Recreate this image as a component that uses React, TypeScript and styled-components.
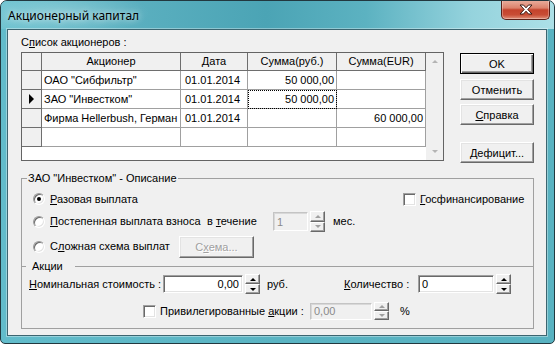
import React from "react"
import styled, { createGlobalStyle } from "styled-components"

const GlobalStyle = createGlobalStyle`
  html, body {
    margin: 0;
    padding: 0;
    background: #ffffff;
  }
  body {
    font-family: "Liberation Sans", Arial, sans-serif;
    font-size: 11px;
    color: #000;
  }
`

interface ShareRow {
    name: string
    date: string
    rub: string
    eur: string
    current?: boolean
}

const rows: ShareRow[] = [
    { name: 'ОАО "Сибфильтр"', date: "01.01.2014", rub: "50 000,00", eur: "" },
    { name: 'ЗАО "Инвестком"', date: "01.01.2014", rub: "50 000,00", eur: "", current: true },
    { name: "Фирма Hellerbush, Герман", date: "01.01.2014", rub: "", eur: "60 000,00" },
    { name: "", date: "", rub: "", eur: "" },
]

export default function App() {
    return (
        <>
            <GlobalStyle />
            <Window>
                <TitleBar>
                    <Title>Акционерный капитал</Title>
                    <CloseButton>
                        <svg width="14" height="11" viewBox="0 0 14 11">
                            <path
                                d="M1 1 H4.5 L7 3.8 L9.5 1 H13 L8.8 5.5 L13 10 H9.5 L7 7.2 L4.5 10 H1 L5.2 5.5 Z"
                                fill="#fff"
                                stroke="#3b1a14"
                                strokeWidth="1"
                                strokeLinejoin="round"
                            />
                        </svg>
                    </CloseButton>
                </TitleBar>

                <Client>
                    <TopSection>
                        <ListColumn>
                            <Caption>С<Acc>п</Acc>исок акционеров :</Caption>
                            <GridFrame>
                                <GridTable>
                                    <Cell $kind="head" />
                                    <Cell $kind="head" $align="center">Акционер</Cell>
                                    <Cell $kind="head" $align="center">Дата</Cell>
                                    <Cell $kind="head" $align="center">Сумма(руб.)</Cell>
                                    <Cell $kind="head" $align="center">Сумма(EUR)</Cell>
                                    {rows.map((r, i) => (
                                        <React.Fragment key={i}>
                                            <Cell $kind="ind">
                                                {r.current && (
                                                    <svg width="6" height="10" viewBox="0 0 6 10">
                                                        <polygon points="0,0 5,5 0,10" fill="#000" />
                                                    </svg>
                                                )}
                                            </Cell>
                                            <Cell $kind="data">{r.name}</Cell>
                                            <Cell $kind="data" $pad={4}>{r.date}</Cell>
                                            <Cell $kind="data" $align="right" $focus={r.current}>{r.rub}</Cell>
                                            <Cell $kind="data" $align="right">{r.eur}</Cell>
                                        </React.Fragment>
                                    ))}
                                </GridTable>
                                <ScrollBar>
                                    <ScrollArrow><Arrow $dir="up" $color="#b4b4b4" /></ScrollArrow>
                                    <ScrollArrow><Arrow $dir="down" $color="#b4b4b4" /></ScrollArrow>
                                </ScrollBar>
                            </GridFrame>
                        </ListColumn>

                        <ButtonColumn>
                            <PushButton $default>OK</PushButton>
                            <PushButton $mt={5}>Отменить</PushButton>
                            <PushButton $mt={4}><Acc>С</Acc>правка</PushButton>
                            <PushButton $mt={17}><Acc>Д</Acc>ефицит...</PushButton>
                        </ButtonColumn>
                    </TopSection>

                    <GroupBox>
                        <Legend>ЗАО "Инвестком" - Описание</Legend>

                        <Row $h={18} $mt={5} $pl={11}>
                            <Radio $checked />
                            <Label $grow><Acc>Р</Acc>азовая выплата</Label>
                            <CheckGroup>
                                <CheckBox />
                                <Label><Acc>Г</Acc>осфинансирование</Label>
                            </CheckGroup>
                        </Row>

                        <Row $h={21} $mt={3} $pl={11}>
                            <Radio />
                            <Label $w={157}><Acc>П</Acc>остепенная выплата взноса</Label>
                            <Label $w={66}>в <Acc>т</Acc>ечение</Label>
                            <Edit $w={35} $h={19} $disabled>1</Edit>
                            <Spin $h={21} $disabled />
                            <Label $ml={8}>мес.</Label>
                        </Row>

                        <Row $h={23} $mt={3} $pl={11}>
                            <Radio />
                            <Label $w={129}>С<Acc>л</Acc>ожная схема выплат</Label>
                            <PushButton $w={75} $h={22} disabled>С<Acc>х</Acc>ема...</PushButton>
                        </Row>

                        <SubGroup>
                            <SubLegend>Акции</SubLegend>

                            <Row $h={20} $mt={1} $pl={7}>
                                <Label $w={134}><Acc>Н</Acc>оминальная стоимость :</Label>
                                <Edit $w={80} $h={18} $align="right">0,00</Edit>
                                <Spin $h={20} />
                                <Label $w={77} $ml={7}>руб.</Label>
                                <Label $w={74}><Acc>К</Acc>оличество :</Label>
                                <Edit $w={76} $h={18}>0</Edit>
                                <Spin $h={20} />
                            </Row>

                            <Row $h={18} $mt={8} $pl={121}>
                                <CheckBox />
                                <Label $w={150}>Привилегированные <Acc>а</Acc>кции :</Label>
                                <Edit $w={62} $h={17} $disabled>0,00</Edit>
                                <Spin $h={18} $disabled />
                                <Label $ml={11}>%</Label>
                            </Row>
                        </SubGroup>
                    </GroupBox>
                </Client>
            </Window>
        </>
    )
}

function Spin({ $h, $disabled }: { $h: number; $disabled?: boolean }) {
    const color = $disabled ? "#a0a0a0" : "#000"
    return (
        <SpinBox $h={$h}>
            <SpinHalf><Arrow $dir="up" $color={color} /></SpinHalf>
            <SpinHalf><Arrow $dir="down" $color={color} /></SpinHalf>
        </SpinBox>
    )
}

const Window = styled.div`
    width: 555px;
    height: 344px;
    box-sizing: border-box;
    border: 1px solid #22383f;
    border-radius: 7px 7px 5px 5px;
    background: linear-gradient(90deg, #62bccb 0%, #5ab4c3 50%, #58b2c1 100%);
    display: flex;
    flex-direction: column;
    overflow: hidden;
`

const TitleBar = styled.div`
    height: 28px;
    display: flex;
    align-items: flex-start;
    justify-content: space-between;
    background:
        radial-gradient(ellipse 90px 22px at 60px 12px, rgba(255, 255, 255, 0.22), transparent),
        linear-gradient(90deg, #6ec3d0 0%, #5aafbf 25%, #4ba4b5 48%, #5cb2c1 66%, #95d3dd 85%, #ace0e7 100%);
`

const Title = styled.div`
    font-family: "Noto Sans", "Open Sans", sans-serif;
    font-size: 12px;
    line-height: 16px;
    padding: 7px 0 0 7px;
    text-shadow: 0 0 6px rgba(255, 255, 255, 0.85);
`

const CloseButton = styled.div`
    width: 49px;
    height: 20px;
    margin: -1px 4px 0 0;
    box-sizing: border-box;
    border: 1px solid #5a2018;
    border-top: none;
    border-radius: 0 0 5px 5px;
    background: linear-gradient(#eab0a0 0%, #dc826c 42%, #c4432c 52%, #c84d35 78%, #e09079 100%);
    box-shadow: inset 0 0 0 1px rgba(255, 255, 255, 0.3);
    display: flex;
    align-items: center;
    justify-content: center;
`

const Client = styled.div`
    margin: 0 7px 0 6px;
    height: 307px;
    box-sizing: border-box;
    border: 1px solid #3c6570;
    box-shadow: 0 0 0 1px rgba(255, 255, 255, 0.35);
    background: #f0f0f0;
    padding: 6px 12px 0 13px;
    display: flex;
    flex-direction: column;
`

const TopSection = styled.div`
    display: flex;
    align-items: flex-start;
    gap: 16px;
`

const ListColumn = styled.div`
    display: flex;
    flex-direction: column;
    width: 423px;
`

const Caption = styled.div`
    height: 13px;
    line-height: 13px;
    margin-bottom: 3px;
    white-space: nowrap;
`

const Acc = styled.span`
    text-decoration: underline;
    text-underline-offset: 1px;
`

const GridFrame = styled.div`
    width: 423px;
    height: 109px;
    box-sizing: border-box;
    border: 1px solid #646464;
    background: #fff;
    display: flex;
`

const GridTable = styled.div`
    width: 404px;
    display: grid;
    grid-template-columns: 20px 139px 67px 89px 89px;
    grid-template-rows: 18px repeat(4, 19px);
    align-content: start;
`

const Cell = styled.div<{
    $kind: "head" | "ind" | "data"
    $align?: "left" | "center" | "right"
    $focus?: boolean
    $pad?: number
}>`
    box-sizing: border-box;
    border-right: 1px solid ${p => (p.$kind === "data" ? "#a0a0a0" : "#6e6e6e")};
    border-bottom: 1px solid ${p => (p.$kind === "data" ? "#a0a0a0" : "#6e6e6e")};
    background: ${p => (p.$kind === "data" ? "#fff" : "#f0f0f0")};
    line-height: ${p => (p.$kind === "head" ? 17 : 18)}px;
    padding: 0 2px 0 ${p => p.$pad ?? 2}px;
    text-align: ${p => p.$align ?? "left"};
    white-space: nowrap;
    overflow: hidden;
    outline: ${p => (p.$focus ? "1px dotted #000" : "none")};
    outline-offset: -1px;
    display: ${p => (p.$kind === "ind" ? "flex" : "block")};
    align-items: center;
    justify-content: center;
`

const ScrollBar = styled.div`
    width: 17px;
    background: #f0f0f0;
    display: flex;
    flex-direction: column;
    justify-content: space-between;
`

const ScrollArrow = styled.div`
    height: 17px;
    display: flex;
    align-items: center;
    justify-content: center;
`

const Arrow = styled.span<{ $dir: "up" | "down"; $color: string }>`
    width: 0;
    height: 0;
    border-left: 3px solid transparent;
    border-right: 3px solid transparent;
    ${p => (p.$dir === "up" ? "border-bottom" : "border-top")}: 3px solid ${p => p.$color};
`

const ButtonColumn = styled.div`
    width: 74px;
    padding-top: 17px;
    display: flex;
    flex-direction: column;
`

const PushButton = styled.button<{ $default?: boolean; $mt?: number; $w?: number; $h?: number }>`
    width: ${p => p.$w ?? 74}px;
    height: ${p => p.$h ?? 21}px;
    margin: ${p => p.$mt ?? 0}px 0 0 0;
    padding: 0;
    box-sizing: border-box;
    font-family: "Liberation Sans", Arial, sans-serif;
    font-size: 11px;
    color: #000;
    background: #f0f0f0;
    border: 1px solid;
    border-color: ${p => (p.$default ? "#000" : "#fff #696969 #696969 #fff")};
    box-shadow: ${p =>
        p.$default
            ? "inset 1px 1px 0 #fff, inset -1px -1px 0 #696969, inset -2px -2px 0 #a0a0a0"
            : "inset -1px -1px 0 #a0a0a0, inset 1px 1px 0 #e3e3e3"};
    flex: none;

    &:disabled {
        color: #a0a0a0;
        text-shadow: 1px 1px 0 #fff;
    }
`

const GroupBox = styled.fieldset`
    margin: 9px 0 0 0;
    padding: 0 0 8px 0;
    border: 1px solid #a0a0a0;
    min-width: 0;
`

const Legend = styled.legend`
    margin-left: 5px;
    padding: 0 1px;
    line-height: 13px;
`

const SubGroup = styled.fieldset`
    margin: 2px 0 0 0;
    padding: 0;
    border: none;
    border-top: 1px solid #a0a0a0;
    min-width: 0;
`

const SubLegend = styled.legend`
    margin-left: 4px;
    padding: 0 12px 0 6px;
    line-height: 13px;
`

const Row = styled.div<{ $h: number; $mt: number; $pl: number }>`
    display: flex;
    align-items: center;
    height: ${p => p.$h}px;
    margin-top: ${p => p.$mt}px;
    padding-left: ${p => p.$pl}px;
    white-space: nowrap;
`

const Label = styled.span<{ $w?: number; $ml?: number; $grow?: boolean }>`
    width: ${p => (p.$w ? `${p.$w}px` : "auto")};
    margin-left: ${p => p.$ml ?? 0}px;
    flex: ${p => (p.$grow ? "1" : "none")};
    line-height: 13px;
`

const Radio = styled.span<{ $checked?: boolean }>`
    width: 12px;
    height: 12px;
    box-sizing: border-box;
    border-radius: 50%;
    border: 1px solid;
    border-color: #9a9a9a #fff #fff #9a9a9a;
    box-shadow: inset 1px 1px 0 #696969, inset -1px -1px 0 #e3e3e3;
    background: #fff;
    margin-right: 5px;
    flex: none;
    display: flex;
    align-items: center;
    justify-content: center;

    &::after {
        content: "";
        width: 4px;
        height: 4px;
        border-radius: 50%;
        background: #000;
        display: ${p => (p.$checked ? "block" : "none")};
    }
`

const CheckGroup = styled.div`
    width: 130px;
    display: flex;
    align-items: center;
    flex: none;
`

const CheckBox = styled.span`
    width: 13px;
    height: 13px;
    box-sizing: border-box;
    border: 1px solid;
    border-color: #a0a0a0 #fff #fff #a0a0a0;
    box-shadow: inset 1px 1px 0 #696969, inset -1px -1px 0 #e3e3e3;
    background: #fff;
    margin-right: 4px;
    flex: none;
`

const Edit = styled.div<{ $w: number; $h: number; $disabled?: boolean; $align?: "left" | "right" }>`
    width: ${p => p.$w}px;
    height: ${p => p.$h}px;
    box-sizing: border-box;
    border: 1px solid;
    border-color: ${p => (p.$disabled ? "#c4c4c4 #fff #fff #c4c4c4" : "#a0a0a0 #fff #fff #a0a0a0")};
    box-shadow: ${p =>
        p.$disabled ? "inset 1px 1px 0 #d8d8d8" : "inset 1px 1px 0 #696969, inset -1px -1px 0 #e3e3e3"};
    background: ${p => (p.$disabled ? "#f0f0f0" : "#fff")};
    color: ${p => (p.$disabled ? "#8a8a8a" : "#000")};
    text-align: ${p => p.$align ?? "left"};
    padding: 0 3px;
    display: flex;
    align-items: center;
    justify-content: ${p => (p.$align === "right" ? "flex-end" : "flex-start")};
    flex: none;
`

const SpinBox = styled.div<{ $h: number }>`
    width: 15px;
    height: ${p => p.$h}px;
    margin-left: 2px;
    display: flex;
    flex-direction: column;
    flex: none;
`

const SpinHalf = styled.div`
    flex: 1;
    box-sizing: border-box;
    border: 1px solid;
    border-color: #fff #696969 #696969 #fff;
    box-shadow: inset -1px -1px 0 #a0a0a0;
    background: #f0f0f0;
    display: flex;
    align-items: center;
    justify-content: center;
`
